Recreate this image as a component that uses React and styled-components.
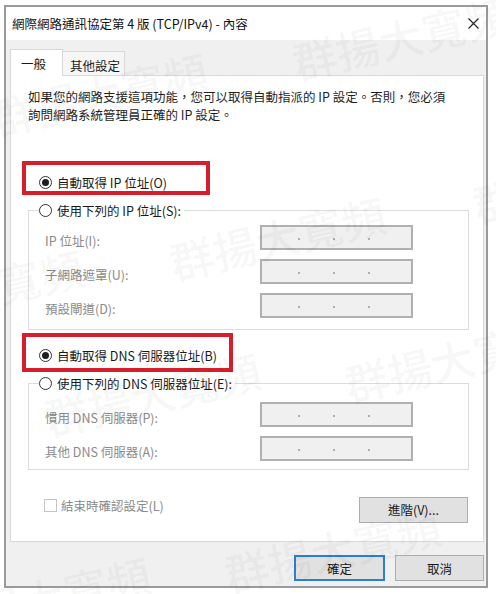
import React from 'react';
import styled, { createGlobalStyle } from 'styled-components';

const Global = createGlobalStyle`
  html, body {
    margin: 0;
    padding: 0;
    background: #ffffff;
  }
  body {
    font-family: "Noto Sans CJK TC", "Liberation Sans", sans-serif;
    font-size: 12.5px;
    color: #1a1a1a;
  }
`;

const Page = styled.div`
  position: relative;
  width: 496px;
  height: 594px;
  overflow: hidden;
  padding: 5px 0 0 4px;
  box-sizing: border-box;
`;

const Dialog = styled.div`
  width: 484px;
  height: 583px;
  border: 2px solid #9a9a9a;
  box-sizing: border-box;
  display: flex;
  flex-direction: column;
  background: #f0f0f0;
`;

const TitleBar = styled.div`
  height: 33px;
  background: #ffffff;
  display: flex;
  align-items: center;
  justify-content: space-between;
  padding: 0 7px 0 6px;
`;

const Title = styled.span`
  font-size: 12.5px;
  color: #111;
`;

const Body = styled.div`
  flex: 1;
  display: flex;
  flex-direction: column;
  padding: 9px 2px 0 4px;
`;

const Tabs = styled.div`
  display: flex;
  align-items: flex-end;
  height: 27px;
  margin-bottom: -1px;
  position: relative;
  z-index: 1;
`;

const Tab = styled.div`
  box-sizing: border-box;
  width: ${p => p.$w}px;
  height: ${p => (p.$active ? 27 : 25)}px;
  padding-left: ${p => p.$pl}px;
  display: flex;
  align-items: center;
  border: 1px solid #d9d9d9;
  border-bottom: ${p => (p.$active ? 'none' : '1px solid #d9d9d9')};
  border-left: ${p => (p.$active ? '1px solid #d9d9d9' : 'none')};
  background: ${p => (p.$active ? '#ffffff' : '#f6f6f6')};
  padding-top: ${p => (p.$active ? 0 : 3)}px;
`;

const Panel = styled.div`
  height: 467px;
  box-sizing: border-box;
  background: #ffffff;
  border: 1px solid #d9d9d9;
  padding: 12px 14px 18px 17px;
  display: flex;
  flex-direction: column;
`;

const Description = styled.p`
  margin: 0;
  line-height: 18px;
  color: #1f1f1f;
`;

const RadioRow = styled.div`
  position: relative;
  display: flex;
  align-items: center;
  gap: 5px;
  height: 20px;
  width: fit-content;
  margin: ${p => p.$mt || 0}px 0 0 11px;

  &::after {
    content: ${p => (p.$box ? "''" : 'none')};
    position: absolute;
    left: ${p => p.$box?.x}px;
    top: ${p => p.$box?.y}px;
    width: ${p => p.$box?.w}px;
    height: ${p => p.$box?.h}px;
    border: 4px solid #d71f2b;
    box-sizing: border-box;
    pointer-events: none;
  }
`;

const Radio = styled.span`
  width: 13px;
  height: 13px;
  border-radius: 50%;
  border: 1px solid #333;
  box-sizing: border-box;
  background: #fff;
  display: flex;
  align-items: center;
  justify-content: center;

  &::after {
    content: '';
    width: 7px;
    height: 7px;
    border-radius: 50%;
    background: ${p => (p.$checked ? '#1e1e1e' : 'transparent')};
  }
`;

const Group = styled.div`
  margin-top: 18px;
  border: 1px solid #dcdcdc;
  padding: 0 0 ${p => p.$pb}px 16px;
`;

const GroupHeader = styled(RadioRow)`
  margin: -11px 0 0 -6px;
  background: #ffffff;
  padding-right: 3px;
`;

const Fields = styled.div`
  margin-top: ${p => p.$mt}px;
  display: grid;
  grid-template-columns: 215px 153px;
  row-gap: 9px;
`;

const FieldLabel = styled.span`
  color: #8a8a8a;
  align-self: center;
  padding-top: 5px;
`;

const AddressBox = styled.div`
  height: 25px;
  box-sizing: border-box;
  border: 2px solid #b0b0b0;
  background: #f0f0f0;
  display: flex;
  align-items: center;
  gap: 33px;
  padding: 3px 0 0 36px;
`;

const Dot = styled.span`
  width: 2px;
  height: 2px;
  border-radius: 50%;
  background: #9a9a9a;
`;

const BottomRow = styled.div`
  margin-top: auto;
  display: flex;
  align-items: center;
  justify-content: space-between;
  padding-left: 16px;
  padding-right: 1px;
`;

const CheckRow = styled.div`
  display: flex;
  align-items: center;
  gap: 4px;
  margin-bottom: 8px;
  color: #8a8a8a;
`;

const CheckBox = styled.span`
  width: 13px;
  height: 13px;
  box-sizing: border-box;
  border: 1px solid #c4c4c4;
  background: #fff;
`;

const Button = styled.button`
  font-family: inherit;
  font-size: 12.5px;
  color: #1a1a1a;
  width: ${p => p.$w}px;
  height: 26px;
  box-sizing: border-box;
  background: #e1e1e1;
  border: ${p => (p.$primary ? '2px solid #2b7fd0' : '1px solid #adadad')};
  padding: 0;
  text-align: center;
`;

const Footer = styled.div`
  display: flex;
  justify-content: flex-end;
  gap: 10px;
  margin-top: 13px;
`;

const Watermark = styled.span`
  position: absolute;
  left: ${p => p.$x}px;
  top: ${p => p.$y - 22}px;
  font-size: 44px;
  line-height: 44px;
  font-weight: 500;
  white-space: nowrap;
  color: rgba(0, 0, 0, 0.045);
  transform: rotate(-13deg);
  transform-origin: 0 50%;
  pointer-events: none;
  z-index: 5;
`;

const CloseIcon = () => (
  <svg width="11" height="11" viewBox="0 0 11 11">
    <path d="M0.5 0.5 L10.5 10.5 M10.5 0.5 L0.5 10.5" stroke="#222" strokeWidth="1.1" fill="none" />
  </svg>
);

const Address = () => (
  <AddressBox>
    <Dot />
    <Dot />
    <Dot />
  </AddressBox>
);

const marks = [
  [293, 62], [-8, 118], [170, 262], [-132, 315], [473, 205],
  [45, 418], [345, 384], [225, 574], [-65, 622],
];

export default function App() {
  return (
    <>
      <Global />
      <Page>
        <Dialog>
          <TitleBar>
            <Title>網際網路通訊協定第 4 版 (TCP/IPv4) - 內容</Title>
            <CloseIcon />
          </TitleBar>
          <Body>
            <Tabs>
              <Tab $active $w={53} $pl={10}>一般</Tab>
              <Tab $w={62} $pl={7}>其他設定</Tab>
            </Tabs>
            <Panel>
              <Description>
                如果您的網路支援這項功能，您可以取得自動指派的 IP 設定。否則，您必須
                <br />
                詢問網路系統管理員正確的 IP 設定。
              </Description>

              <RadioRow $mt={48} $box={{ x: -17, y: -11, w: 188, h: 34 }}>
                <Radio $checked />
                自動取得 IP 位址(O)
              </RadioRow>

              <Group $pb={11}>
                <GroupHeader>
                  <Radio />
                  使用下列的 IP 位址(S):
                </GroupHeader>
                <Fields $mt={5}>
                  <FieldLabel>IP 位址(I):</FieldLabel>
                  <Address />
                  <FieldLabel>子網路遮罩(U):</FieldLabel>
                  <Address />
                  <FieldLabel>預設閘道(D):</FieldLabel>
                  <Address />
                </Fields>
              </Group>

              <RadioRow $mt={15} $box={{ x: -17, y: -12, w: 211, h: 39 }}>
                <Radio $checked />
                自動取得 DNS 伺服器位址(B)
              </RadioRow>

              <Group $pb={8}>
                <GroupHeader>
                  <Radio />
                  使用下列的 DNS 伺服器位址(E):
                </GroupHeader>
                <Fields $mt={9}>
                  <FieldLabel>慣用 DNS 伺服器(P):</FieldLabel>
                  <Address />
                  <FieldLabel>其他 DNS 伺服器(A):</FieldLabel>
                  <Address />
                </Fields>
              </Group>

              <BottomRow>
                <CheckRow>
                  <CheckBox />
                  結束時確認設定(L)
                </CheckRow>
                <Button $w={109}>進階(V)...</Button>
              </BottomRow>
            </Panel>
            <Footer>
              <Button $primary $w={91}>確定</Button>
              <Button $w={89}>取消</Button>
            </Footer>
          </Body>
        </Dialog>
        {marks.map(([x, y], i) => (
          <Watermark key={i} $x={x} $y={y}>群揚大寬頻</Watermark>
        ))}
      </Page>
    </>
  );
}
